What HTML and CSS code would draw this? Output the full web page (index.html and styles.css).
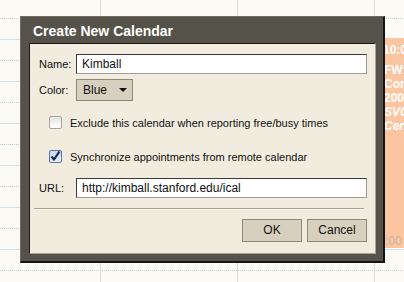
FILE: index.html
```html
<!DOCTYPE html>
<html>
    <head>
        <title>Create New Calendar</title>
        <link rel="stylesheet" href="styles.css">
    </head>
    <body>
        <div class="calendar">
            <div class="day first"></div>
            <div class="day"></div>
            <div class="day"></div>
            <div class="day">
                <div class="event">
                    <div class="event-time">10:00</div>
                    <div class="event-title">FW:<br>Comm<br>2008</div>
                    <div class="event-place">SVC<br>Cent</div>
                    <div class="event-end">:00</div>
                </div>
            </div>
        </div>

        <div class="dialog">
            <div class="dialog-title">Create New Calendar</div>
            <div class="dialog-body">
                <div class="field name-row">
                    <span class="label">Name:</span>
                    <div class="text-input">Kimball</div>
                </div>
                <div class="field color-row">
                    <span class="label">Color:</span>
                    <div class="select">
                        <span>Blue</span>
                        <span class="arrow"></span>
                    </div>
                </div>
                <div class="check-row exclude-row">
                    <span class="checkbox"></span>
                    <span>Exclude this calendar when reporting free/busy times</span>
                </div>
                <div class="check-row sync-row">
                    <span class="checkbox checked">
                        <svg width="11" height="11" viewBox="0 0 11 11">
                            <path d="M1.5 5.5 L4 8.5 L9.5 0.5" fill="none" stroke="#1b2a55" stroke-width="2.2"/>
                        </svg>
                    </span>
                    <span>Synchronize appointments from remote calendar</span>
                </div>
                <div class="field url-row">
                    <span class="label">URL:</span>
                    <div class="text-input">http://kimball.stanford.edu/ical</div>
                </div>
                <div class="separator"></div>
                <div class="buttons">
                    <div class="button">OK</div>
                    <div class="button">Cancel</div>
                </div>
            </div>
        </div>
    </body>
</html>
```

FILE: styles.css
```css
html, body {
    margin: 0;
    height: 100%;
    overflow: hidden;
}

body {
    font-family: "Liberation Sans", Arial, sans-serif;
    font-size: 11px;
    color: #111;
    background: #fbfaf5;
}

/* calendar behind the dialog */
.calendar {
    height: 282px;
    display: grid;
    grid-template-columns: 100px 137px 137px 1fr;
    background-color: #fbfaf5;
    background-image:
        repeating-linear-gradient(to bottom, transparent 0 39px, #d3e3f3 39px 40px, transparent 40px 42px),
        repeating-linear-gradient(to right, transparent 0 1px, #fbfaf5 1px 2px),
        repeating-linear-gradient(to bottom, transparent 0 18px, #c4cddc 18px 19px, transparent 19px 42px);
}

.day {
    box-sizing: border-box;
    border-left: 1px solid #dcdad4;
}

.day.first {
    border-left: none;
}

.event {
    margin: 38px 0 0 9px;
    height: 210px;
    background: #fbc59f;
    color: #fff;
    font-weight: bold;
    font-size: 12px;
    line-height: 14px;
    padding: 5px 0 0 0;
    box-sizing: border-box;
    overflow: hidden;
    white-space: nowrap;
}

.event-time {
    margin-bottom: 6px;
    margin-left: -1px;
}

.event-place {
    font-style: italic;
}

.event-end {
    margin-top: 101px;
    color: #c4b5aa;
    font-weight: normal;
    margin-left: 1px;
}

/* dialog */
.dialog {
    position: absolute;
    left: 20px;
    top: 16px;
    width: 365px;
    height: 247px;
    box-sizing: border-box;
    background: #55524a;
    border-left: 1px solid #6e6a62;
    border-top: 1px solid #6e6a62;
    border-right: 2px solid #141414;
    border-bottom: 2px solid #141414;
    padding: 0 7px 7px 8px;
}

.dialog-title {
    height: 26px;
    box-sizing: border-box;
    padding: 6px 0 0 4px;
    color: #fff;
    font-weight: bold;
    font-size: 14px;
    line-height: 16px;
}

.dialog-body {
    height: 211px;
    box-sizing: border-box;
    background: #f2ecdf;
    border-top: 1px solid #1c1c1a;
    border-left: 1px solid #1c1c1a;
    border-right: 1px solid #a9a498;
    border-bottom: 1px solid #a9a498;
    padding: 10px 8px 0 9px;
    display: flex;
    flex-direction: column;
}

.field {
    display: flex;
    align-items: center;
}

.label {
    width: 37px;
    flex: none;
}

.text-input {
    flex: 1;
    height: 20px;
    box-sizing: border-box;
    background: #fff;
    border: 1px solid #a29d92;
    border-top-color: #3a3a38;
    border-left-color: #3a3a38;
    padding: 0 0 0 5px;
    line-height: 18px;
    font-size: 12px;
}

.color-row {
    margin-top: 5px;
}

.select {
    width: 57px;
    height: 22px;
    box-sizing: border-box;
    background: #d8d0be;
    border: 1px solid #8d887c;
    display: flex;
    align-items: center;
    justify-content: space-between;
    padding: 0 5px 0 6px;
    font-size: 12px;
}

.arrow {
    width: 0;
    height: 0;
    border-left: 4px solid transparent;
    border-right: 4px solid transparent;
    border-top: 4px solid #111;
}

.check-row {
    display: flex;
    align-items: center;
    height: 13px;
    padding-left: 10px;
    gap: 8px;
}

.exclude-row {
    margin-top: 15px;
}

.sync-row {
    margin-top: 21px;
}

.checkbox {
    width: 13px;
    height: 13px;
    box-sizing: border-box;
    border: 1px solid #a4a4a4;
    border-radius: 2px;
    background: linear-gradient(#e4e4e2, #fdfdfc);
    display: flex;
    align-items: center;
    justify-content: center;
}

.checkbox.checked {
    border-color: #5b76a8;
    background: linear-gradient(#c7d9f2, #e8f0fb);
}

.url-row {
    margin-top: 15px;
}

.separator {
    margin: 10px 3px 0 -5px;
    height: 1px;
    background: #a7a195;
    border-bottom: 1px solid #fbf8f2;
}

.buttons {
    display: flex;
    justify-content: flex-end;
    gap: 5px;
    margin-top: 9px;
}

.button {
    width: 60px;
    height: 23px;
    box-sizing: border-box;
    background: #d8d0be;
    border: 1px solid #8d887c;
    text-align: center;
    line-height: 21px;
    font-size: 12px;
}
```
